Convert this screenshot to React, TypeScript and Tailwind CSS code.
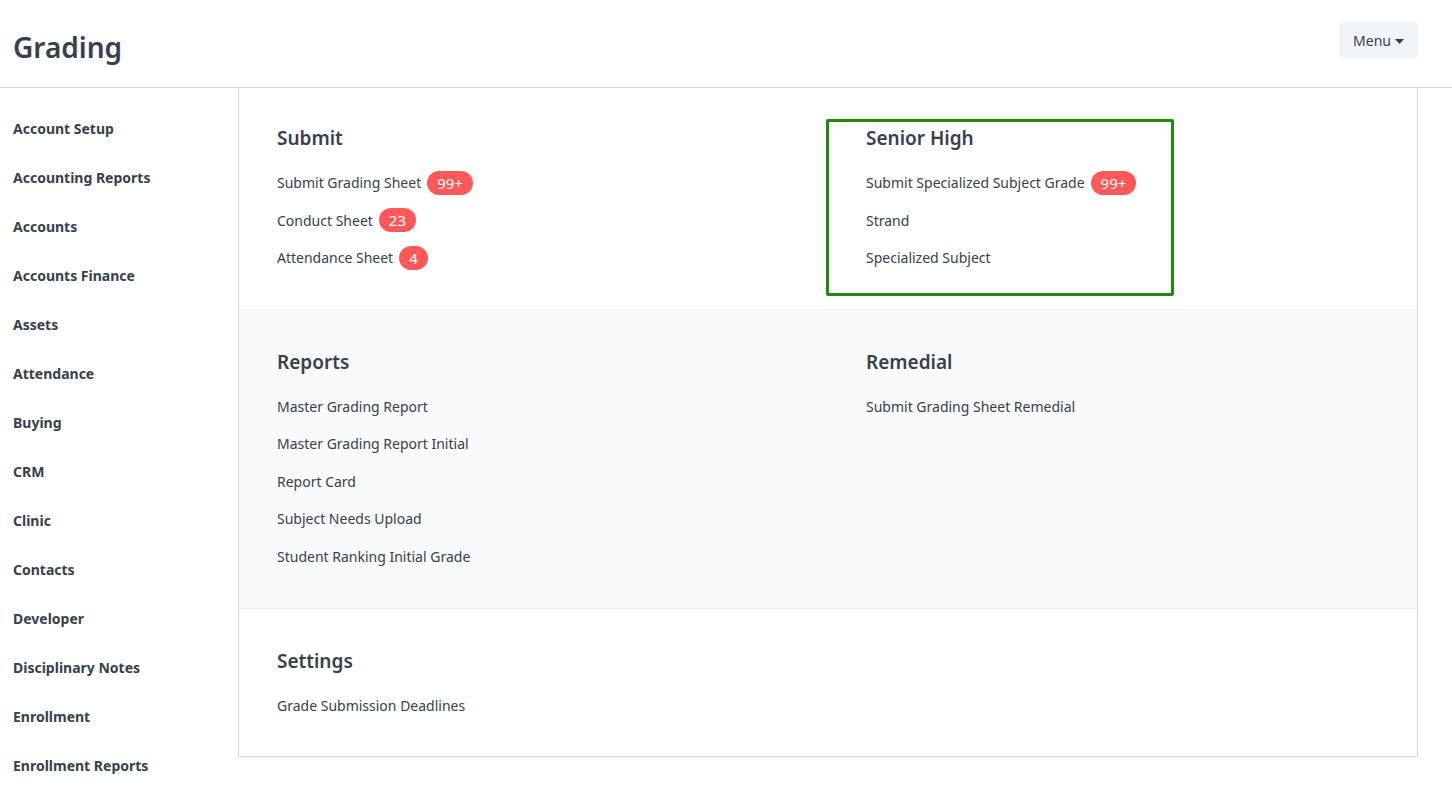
import React from 'react';

type Link = { label: string; count?: string };
type Group = { title: string; links: Link[] };

const sidebarItems = [
  'Account Setup',
  'Accounting Reports',
  'Accounts',
  'Accounts Finance',
  'Assets',
  'Attendance',
  'Buying',
  'CRM',
  'Clinic',
  'Contacts',
  'Developer',
  'Disciplinary Notes',
  'Enrollment',
  'Enrollment Reports',
];

const sections: { groups: Group[]; shaded?: boolean; highlight?: number }[] = [
  {
    groups: [
      {
        title: 'Submit',
        links: [
          { label: 'Submit Grading Sheet', count: '99+' },
          { label: 'Conduct Sheet', count: '23' },
          { label: 'Attendance Sheet', count: '4' },
        ],
      },
      {
        title: 'Senior High',
        links: [
          { label: 'Submit Specialized Subject Grade', count: '99+' },
          { label: 'Strand' },
          { label: 'Specialized Subject' },
        ],
      },
    ],
    highlight: 1,
  },
  {
    groups: [
      {
        title: 'Reports',
        links: [
          { label: 'Master Grading Report' },
          { label: 'Master Grading Report Initial' },
          { label: 'Report Card' },
          { label: 'Subject Needs Upload' },
          { label: 'Student Ranking Initial Grade' },
        ],
      },
      {
        title: 'Remedial',
        links: [{ label: 'Submit Grading Sheet Remedial' }],
      },
    ],
    shaded: true,
  },
  {
    groups: [
      {
        title: 'Settings',
        links: [{ label: 'Grade Submission Deadlines' }],
      },
    ],
  },
];

const GroupBlock = ({ group, highlighted }: { group: Group; highlighted?: boolean }) => (
  <div className="relative">
    {highlighted && (
      <div className="absolute left-[-40px] top-[-7px] w-[348px] h-[177px] border-[3px] border-[#1f8a0b] rounded-[2px] pointer-events-none" />
    )}
    <h3 className="text-[19px] leading-6 font-semibold text-[#36414c] mb-[14px]">{group.title}</h3>
    <ul>
      {group.links.map(link => (
        <li key={link.label} className="h-[37.5px] flex items-center gap-[6px] text-[14px] text-[#36414c]">
          <span>{link.label}</span>
          {link.count && (
            <span className="h-6 min-w-[28px] px-[10px] rounded-full bg-[#ff5858] text-white text-[15px] flex items-center justify-center">
              {link.count}
            </span>
          )}
        </li>
      ))}
    </ul>
  </div>
);

export default function App() {
  return (
    <div className="min-h-screen bg-white text-[#36414c]" style={{ fontFamily: '"Noto Sans", "Open Sans", sans-serif' }}>
      <header className="h-[88px] border-b border-[#d1d8dd] flex items-center justify-between pl-[13px] pr-[34px]">
        <h1 className="text-[28px] font-semibold text-[#36414c] mt-[6px]">Grading</h1>
        <button className="h-9 px-[14px] rounded bg-[#f0f4f7] text-[14px] text-[#36414c] flex items-center gap-1 -mt-[7px]">
          Menu
          <svg width="9" height="5" viewBox="0 0 9 5" className="mt-[2px]">
            <path d="M0 0h9L4.5 5z" fill="#36414c" />
          </svg>
        </button>
      </header>

      <div className="flex pr-[34px]">
        <nav className="w-[238px] shrink-0 pl-[13px] pt-[16px]">
          {sidebarItems.map(item => (
            <div key={item} className="h-[49px] flex items-center text-[14px] font-bold text-[#36414c]">
              {item}
            </div>
          ))}
        </nav>

        <main className="flex-1 border-x border-b border-[#d1d8dd] self-start">
          {sections.map((section, i) => (
            <section
              key={i}
              className={`px-[38px] grid grid-cols-[589px_1fr] ${i > 0 ? 'border-t border-[#ebeff2] pt-[40px]' : 'pt-[38px]'} ${i === 1 ? 'pb-[33px]' : i === 2 ? 'pb-[31px]' : 'pb-[32px]'} ${section.shaded ? 'bg-[#f9fafb]' : 'bg-white'}`}
            >
              {section.groups.map((g, j) => (
                <GroupBlock key={g.title} group={g} highlighted={section.highlight === j} />
              ))}
            </section>
          ))}
        </main>
      </div>
    </div>
  );
}
